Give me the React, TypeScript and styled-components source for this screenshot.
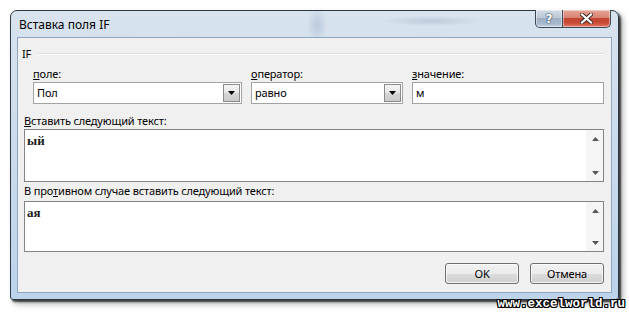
import React from 'react';
import styled, { createGlobalStyle } from 'styled-components';

const Global = createGlobalStyle`
  html, body { margin: 0; padding: 0; background: #ffffff; }
  body {
    width: 629px; height: 312px; overflow: hidden;
    font-family: "Noto Sans", "Open Sans", sans-serif;
    font-size: 11px; color: #000;
  }
`;

const Page = styled.div`
  position: relative;
  width: 629px;
  height: 312px;
  box-sizing: border-box;
  padding: 10px 0 0 10px;
`;

const Window = styled.div`
  width: 609px;
  height: 290px;
  box-sizing: border-box;
  border: 1px solid #2c3846;
  border-radius: 7px 7px 3px 3px;
  background: linear-gradient(to bottom, #d8e3ee 0%, #cddcec 40%, #bcd3ea 100%);
  box-shadow: 2px 2px 2px rgba(0, 0, 0, 0.7), 4px 4px 6px rgba(0, 0, 0, 0.3);
  display: flex;
  flex-direction: column;
  padding: 0 6px 6px 6px;
`;

const TitleBar = styled.div`
  height: 26px;
  flex: none;
  display: flex;
  align-items: flex-start;
  margin: 0 -6px;
  padding: 0 6px;
  background:
    radial-gradient(ellipse 45px 6px at 178px 31px, rgba(120, 135, 155, 0.3), transparent),
    radial-gradient(ellipse 10px 18px at 306px 14px, rgba(100, 130, 170, 0.25), transparent),
    radial-gradient(ellipse 50px 5px at 420px 10px, rgba(110, 130, 160, 0.25), transparent),
    radial-gradient(ellipse 50px 5px at 420px 30px, rgba(110, 130, 160, 0.2), transparent),
    radial-gradient(ellipse 60px 8px at 100px 32px, rgba(170, 180, 195, 0.3), transparent);
`;

const Title = styled.div`
  flex: 1;
  padding: 6px 0 0 2px;
  font-size: 12px;
  line-height: 16px;
  color: #000;
`;

const TitleButtons = styled.div`
  display: flex;
  margin-right: 1px;
  margin-top: -1px;
`;

const CaptionButton = styled.div<{ $close?: boolean }>`
  height: 18px;
  width: ${(p) => (p.$close ? '48px' : '28px')};
  box-sizing: border-box;
  border: 1px solid #3b4657;
  border-top: none;
  ${(p) => (p.$close ? 'border-left: none;' : '')}
  border-radius: ${(p) => (p.$close ? '0 0 5px 0' : '0 0 0 5px')};
  background: ${(p) =>
    p.$close
      ? 'linear-gradient(to bottom, #e6a496 0%, #d98474 45%, #c24633 50%, #c84a36 75%, #e07a5e 100%)'
      : 'linear-gradient(to bottom, #d3dce6 0%, #bcc8d6 45%, #9fb0c4 50%, #a7b8cc 80%, #c6d4e2 100%)'};
  box-shadow: inset 0 0 0 1px rgba(255, 255, 255, 0.45);
  display: flex;
  align-items: center;
  justify-content: center;
  color: #fff;
  font-family: "DejaVu Sans", sans-serif;
  font-weight: bold;
  font-size: 12px;
  text-shadow: 0 0 2px #2c3a4c, 0 0 1px #2c3a4c;
`;

const Client = styled.div`
  flex: 1;
  box-sizing: border-box;
  border: 1px solid #8fa6c0;
  background: #f0f0f0;
  padding: 8px 7px 0 6px;
  display: flex;
  flex-direction: column;
  letter-spacing: -0.15px;
`;

const GroupHeader = styled.div`
  display: flex;
  align-items: center;
  height: 16px;
  line-height: 16px;
  margin-left: -2px;
`;

const GroupLine = styled.div`
  flex: 1;
  height: 1px;
  margin-left: 7px;
  background: #d5dfe5;
  border-bottom: 1px solid #ffffff;
`;

const Fields = styled.div`
  display: grid;
  grid-template-columns: 209px 152px 192px;
  column-gap: 9px;
  margin: 4px 0 0 9px;
`;

const Field = styled.div`
  display: flex;
  flex-direction: column;
`;

const Label = styled.div<{ $top?: number; $bottom?: number }>`
  line-height: 15px;
  height: 15px;
  margin-top: ${(p) => p.$top ?? 0}px;
  margin-bottom: ${(p) => p.$bottom ?? 1}px;
  white-space: nowrap;
`;

const Box = styled.div`
  height: 22px;
  box-sizing: border-box;
  border: 1px solid #a3a3a3;
  background: #ffffff;
  display: flex;
  align-items: center;
  padding: 1px;
`;

const BoxText = styled.div`
  flex: 1;
  padding-left: 2px;
  line-height: 16px;
`;

const DropButton = styled.div`
  width: 17px;
  height: 18px;
  box-sizing: border-box;
  border: 1px solid #8b8b8b;
  background: linear-gradient(to bottom, #f4f4f4 0%, #e6e6e6 50%, #d6d6d6 51%, #cbcbcb 100%);
  display: flex;
  align-items: center;
  justify-content: center;
`;

const TextArea = styled.div<{ $h: number }>`
  height: ${(p) => p.$h}px;
  box-sizing: border-box;
  border: 1px solid #848484;
  background: #ffffff;
  display: flex;
`;

const AreaText = styled.div`
  flex: 1;
  padding: 3px 0 0 2px;
  font-family: "Liberation Serif", "DejaVu Serif", serif;
  font-weight: bold;
  font-size: 13px;
  line-height: 15px;
  letter-spacing: 0;
  color: #1a1a1a;
`;

const ScrollBar = styled.div`
  width: 17px;
  background: #f5f5f5;
  display: flex;
  flex-direction: column;
  justify-content: space-between;
`;

const ScrollButton = styled.div`
  height: 17px;
  display: flex;
  align-items: center;
  justify-content: center;
  padding-left: 2px;
`;

const ButtonRow = styled.div`
  display: flex;
  justify-content: flex-end;
  gap: 11px;
  margin-top: 11px;
`;

const Button = styled.div`
  width: 74px;
  height: 21px;
  box-sizing: border-box;
  border: 1px solid #707070;
  border-radius: 3px;
  background: linear-gradient(to bottom, #f2f2f2 0%, #ebebeb 50%, #dddddd 51%, #cfcfcf 100%);
  box-shadow: inset 0 0 0 1px rgba(255, 255, 255, 0.7);
  display: flex;
  align-items: center;
  justify-content: center;
  line-height: 16px;
`;

const Watermark = styled.div`
  position: absolute;
  right: 4px;
  bottom: 0px;
  font-family: "Liberation Mono", "DejaVu Sans Mono", monospace;
  font-weight: bold;
  font-size: 12.5px;
  line-height: 15px;
  color: #ffffff;
  text-shadow:
    1px 0 0 #000, -1px 0 0 #000, 0 1px 0 #000, 0 -1px 0 #000,
    1px 1px 0 #000, -1px -1px 0 #000, 1px -1px 0 #000, -1px 1px 0 #000;
`;

const DownTri = () => (
  <svg width="7" height="4" viewBox="0 0 7 4">
    <path d="M0 0 H7 L3.5 4 Z" fill="#000" />
  </svg>
);

const ScrollArrow = ({ up }: { up?: boolean }) => (
  <svg width="7" height="4" viewBox="0 0 7 4">
    <path d={up ? 'M0 4 H7 L3.5 0 Z' : 'M0 0 H7 L3.5 4 Z'} fill="#555" />
  </svg>
);

const CloseX = () => (
  <svg width="13" height="11" viewBox="0 0 13 11">
    <path d="M2 1.5 L11 9.5 M11 1.5 L2 9.5" stroke="#3a2a28" strokeWidth="4" strokeLinecap="square" />
    <path d="M2 1.5 L11 9.5 M11 1.5 L2 9.5" stroke="#ffffff" strokeWidth="2.2" strokeLinecap="square" />
  </svg>
);

const Combo = ({ value }: { value: string }) => (
  <Box>
    <BoxText>{value}</BoxText>
    <DropButton>
      <DownTri />
    </DropButton>
  </Box>
);

const Memo = ({ text, h }: { text: string; h: number }) => (
  <TextArea $h={h}>
    <AreaText>{text}</AreaText>
    <ScrollBar>
      <ScrollButton>
        <ScrollArrow up />
      </ScrollButton>
      <ScrollButton>
        <ScrollArrow />
      </ScrollButton>
    </ScrollBar>
  </TextArea>
);

export default function App() {
  return (
    <>
      <Global />
      <Page>
        <Window>
          <TitleBar>
            <Title>Вставка поля IF</Title>
            <TitleButtons>
              <CaptionButton>?</CaptionButton>
              <CaptionButton $close>
                <CloseX />
              </CaptionButton>
            </TitleButtons>
          </TitleBar>
          <Client>
            <GroupHeader>
              IF
              <GroupLine />
            </GroupHeader>
            <Fields>
              <Field>
                <Label>
                  <u>п</u>оле:
                </Label>
                <Combo value="Пол" />
              </Field>
              <Field>
                <Label>
                  <u>о</u>ператор:
                </Label>
                <Combo value="равно" />
              </Field>
              <Field>
                <Label>
                  <u>з</u>начение:
                </Label>
                <Box>
                  <BoxText>м</BoxText>
                </Box>
              </Field>
            </Fields>
            <Label $top={9}>
              <u>В</u>ставить следующий текст:
            </Label>
            <Memo text="ый" h={53} />
            <Label $top={1} $bottom={3}>
              В про<u>т</u>ивном случае вставить следующий текст:
            </Label>
            <Memo text="ая" h={51} />
            <ButtonRow>
              <Button>OK</Button>
              <Button>Отмена</Button>
            </ButtonRow>
          </Client>
        </Window>
        <Watermark>www.excelworld.ru</Watermark>
      </Page>
    </>
  );
}
